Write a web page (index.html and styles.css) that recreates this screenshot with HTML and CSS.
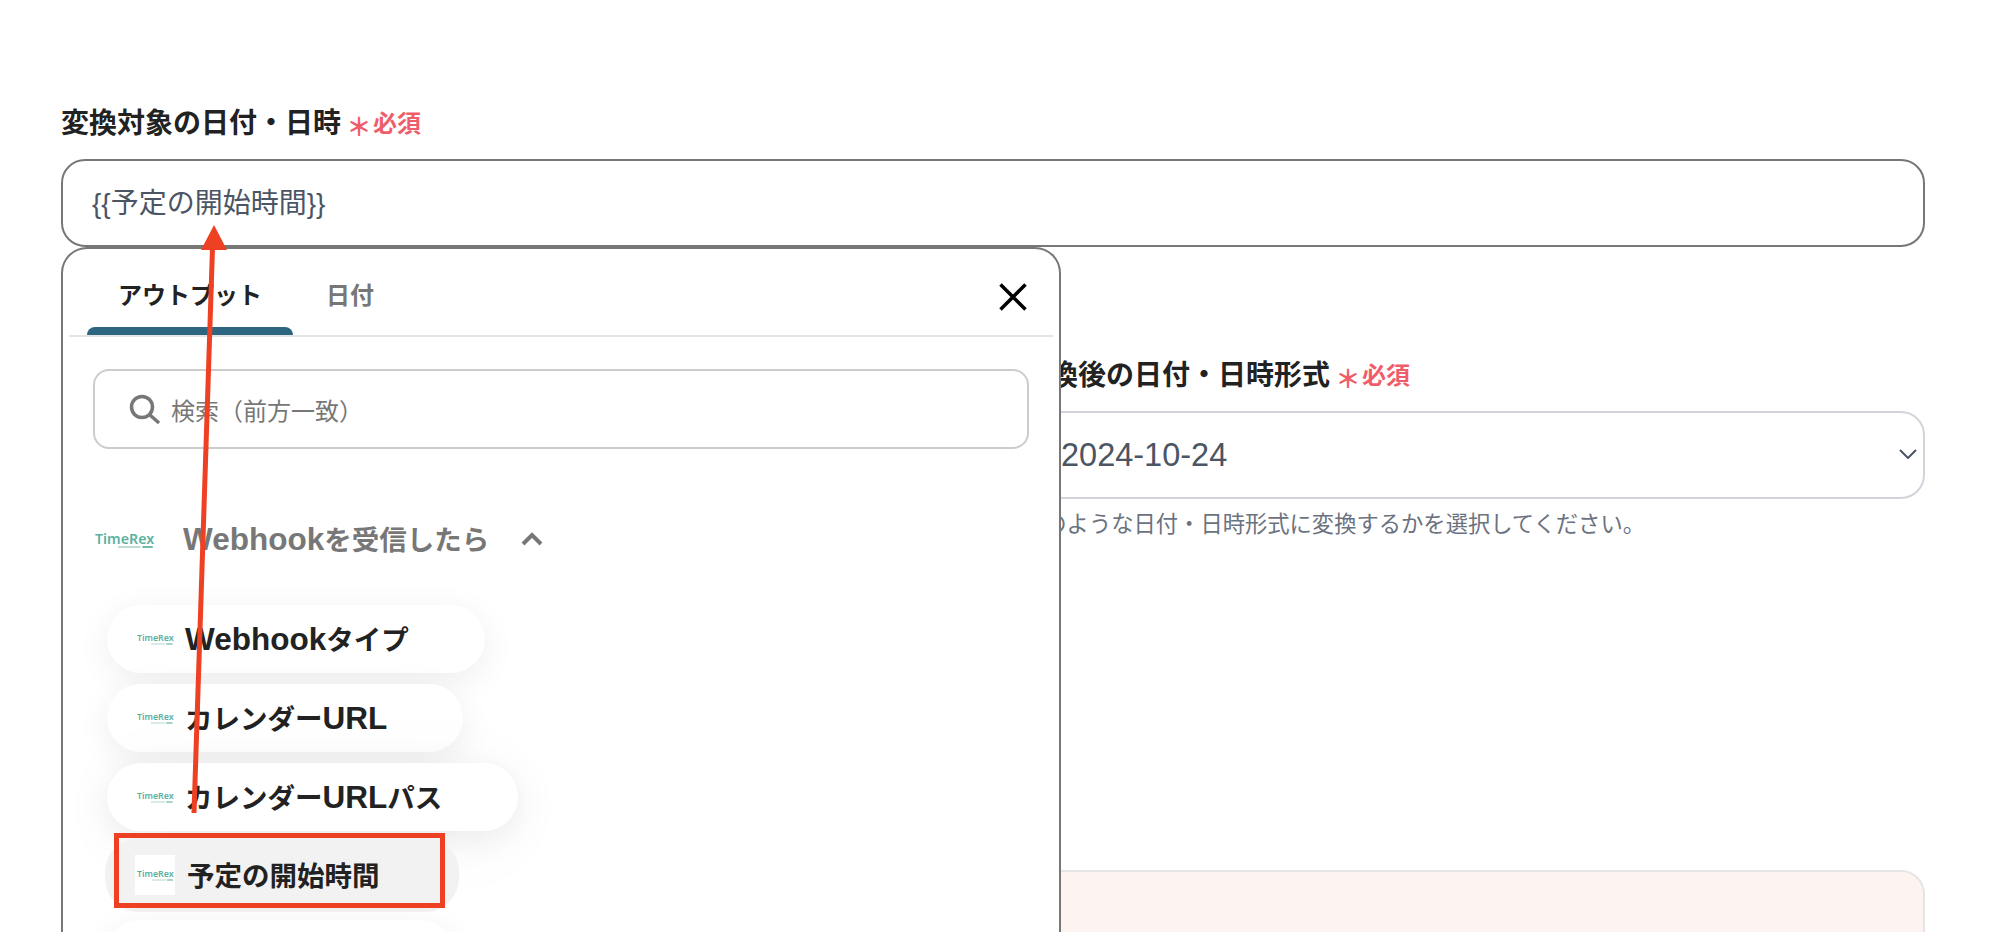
FILE: index.html
```html
<!DOCTYPE html>
<html lang="ja">
<head>
<meta charset="utf-8">
<title>日付・日時形式の変換</title>
<link rel="stylesheet" href="styles.css">
</head>
<body>
<main class="page">
  <section class="field">
    <div class="label">変換対象の日付・日時<span class="req"><span class="star">＊</span>必須</span></div>
    <div class="input">{{予定の開始時間}}</div>
  </section>
  <section class="field field-right">
    <div class="label">変換後の日付・日時形式<span class="req"><span class="star">＊</span>必須</span></div>
    <div class="select">
      <span class="select-value">2024-10-24</span>
      <svg class="select-chevron" viewBox="0 0 18 10"><path d="M1 1l8 8 8-8"/></svg>
    </div>
    <p class="help">どのような日付・日時形式に変換するかを選択してください。</p>
  </section>
  <div class="notice"></div>
</main>

<div class="popup">
  <div class="tabs">
    <div class="tab tab-active">アウトプット</div>
    <div class="tab">日付</div>
    <svg class="close" viewBox="0 0 28 28"><path d="M1.5 1.5l25 25M26.5 1.5l-25 25"/></svg>
  </div>
  <div class="body">
    <div class="search">
      <svg class="search-icon" viewBox="0 0 32 31"><circle cx="13" cy="13" r="10.500"/><path d="M21 21l9 8"/></svg>
      <span>検索（前方一致）</span>
    </div>
    <div class="section-head">
      <span class="logo logo-lg">TimeRex<svg class="logo-sub" viewBox="0 0 40 2"><path d="M0 1h26"/><path class="dark" d="M28 1h12"/></svg></span>
      <span class="section-title"><span class="lat">Webhook</span>を受信したら</span>
      <svg class="section-chevron" viewBox="0 0 22 14"><path d="M2 12l9-9 9 9"/></svg>
    </div>
    <div class="pills">
      <div class="pill"><span class="logo">TimeRex<svg class="logo-sub" viewBox="0 0 40 2"><path d="M0 1h26"/><path class="dark" d="M28 1h12"/></svg></span><span><span class="lat">Webhook</span>タイプ</span></div>
      <div class="pill"><span class="logo">TimeRex<svg class="logo-sub" viewBox="0 0 40 2"><path d="M0 1h26"/><path class="dark" d="M28 1h12"/></svg></span><span>カレンダー<span class="lat">URL</span></span></div>
      <div class="pill pill-wide-shadow"><span class="logo">TimeRex<svg class="logo-sub" viewBox="0 0 40 2"><path d="M0 1h26"/><path class="dark" d="M28 1h12"/></svg></span><span>カレンダー<span class="lat">URL</span>パス</span></div>
      <div class="pill pill-hover"><span class="logo logo-box">TimeRex<svg class="logo-sub" viewBox="0 0 40 2"><path d="M0 1h26"/><path class="dark" d="M28 1h12"/></svg></span><span>予定の開始時間</span></div>
      <div class="pill pill-next"></div>
    </div>
  </div>
</div>

<div class="mark-box"></div>
<svg class="mark-arrow" viewBox="0 0 1990 932">
  <path class="shaft" d="M194 813L212.500 248"/>
  <path class="head" d="M214 225L201 250H227Z"/>
</svg>
</body>
</html>
```
FILE: styles.css
```css
* { box-sizing: border-box; }
html, body { margin: 0; height: 100%; overflow: hidden; background: #fff; }
body { font-family: "Liberation Sans", "Noto Sans CJK JP", sans-serif; color: #222; position: relative; }

.page { height: 932px; overflow: hidden; padding: 104px 65px 0 61px; display: flex; flex-direction: column; }
.label { font-size: 28px; font-weight: 700; line-height: 40px; display: flex; align-items: center; }
.req { display: inline-flex; align-items: center; margin-left: 4px; color: #ef5d6b; font-size: 24px; font-weight: 700; }
.star { width: 28px; font-size: 25px; line-height: 1; font-weight: 700; transform: translateY(3px); text-align: center; }

.input { margin-top: 15px; height: 88px; padding: 0 0 4px 29px; border: 2px solid #777; border-radius: 24px; display: flex; align-items: center; font-size: 28px; color: #4b5563; }

.field-right { margin: 109px 0 0 961px; }
.select { margin-top: 15px; height: 88px; border: 2px solid #d1d5db; border-radius: 24px; padding: 0 6px 0 37px; display: flex; align-items: center; justify-content: space-between; color: #4b5563; font-size: 32.500px; }
.select-chevron { width: 18px; height: 10px; fill: none; stroke: #4b5563; stroke-width: 2; margin-top: -2px; }
.help { margin: 11px 0 0; font-size: 22.300px; line-height: 30px; color: #6b7280; }

.notice { margin-top: 330px; height: 200px; flex: none; background: #fdf3f1; border: 2px solid #e5e5e5; border-radius: 24px; }

.popup { position: absolute; left: 61px; top: 247px; width: 1000px; height: 685px; background: #fff; border: 2px solid #777; border-bottom: 0; border-radius: 26px 26px 0 0; padding: 0 6px; overflow: visible; }
.tabs { height: 88px; display: flex; align-items: flex-end; border-bottom: 2px solid #e5e5e5; padding-left: 18px; position: relative; }
.tab { width: 206px; height: 76px; display: flex; justify-content: center; padding-top: 24px; line-height: 26px; font-size: 24px; font-weight: 700; color: #777; }
.tab + .tab { width: 114px; }
.tab-active { color: #222; position: relative; }
.tab-active::after { content: ""; position: absolute; left: 0; right: 0; bottom: 0; height: 8px; background: #2d6680; border-radius: 8px 8px 0 0; }
.close { position: absolute; right: 26px; top: 34px; width: 28px; height: 28px; fill: none; stroke: #000; stroke-width: 3.500; }

.body { padding: 32px 24px 0 18px; }
.search { margin-left: 6px; height: 80px; border: 2px solid #ccc; border-radius: 16px; display: flex; align-items: center; padding-left: 34px; gap: 10px; font-size: 24px; color: #777; }
.search-icon { width: 32px; height: 31px; fill: none; stroke: #777; stroke-width: 3.500; }

.section-head { margin-top: 68px; height: 44px; display: flex; align-items: center; padding-left: 8px; }
.section-title { margin-left: 30px; padding-bottom: 2px; font-size: 27.500px; font-weight: 700; color: #777; }
.section-chevron { width: 22px; height: 14px; margin-left: 32px; fill: none; stroke: #777; stroke-width: 4; }
.lat { font-size: 31.500px; }

.logo { display: inline-flex; flex-direction: column; align-items: stretch; width: 36px; margin-right: 12px; font-family: "Noto Sans", sans-serif; font-size: 8.800px; font-weight: 600; line-height: 10px; color: #5cb0a0; white-space: nowrap; flex: none; }
.logo-lg { width: 58px; margin: 0; font-size: 14.200px; line-height: 15px; }
.logo-sub { display: block; width: 60%; height: 2px; margin-left: 40%; fill: none; stroke: #b9d8d2; stroke-width: 2; }
.logo-sub .dark { stroke: #5cb0a0; }

.pills { margin: 44px 0 0 20px; display: flex; flex-direction: column; align-items: flex-start; gap: 11px; }
.pill { height: 68px; padding: 0 76px 0 30px; border-radius: 34px; background: #fff; box-shadow: 0 8px 34px rgba(0, 0, 0, .07); display: flex; align-items: center; font-size: 27.500px; font-weight: 700; color: #222; white-space: nowrap; }
.pill > span:last-child { padding-bottom: 3px; }
.pill-wide-shadow { box-shadow: 0 8px 34px rgba(0, 0, 0, .07), 0 10px 90px rgba(0, 0, 0, .035); }
.pill-hover { height: 74px; margin: -4px 0 -3px -2px; padding-right: 79px; background: #f2f2f2; box-shadow: none; }
.pill-next { width: 347px; flex: none; }
.logo-box { width: 40px; height: 40px; background: #fff; justify-content: center; padding-left: 2px; }
.logo-box .logo-sub { width: 56%; }

.mark-box { position: absolute; left: 114px; top: 833px; width: 331px; height: 75px; border: 5px solid #ee4023; }
.mark-arrow { position: absolute; left: 0; top: 0; width: 1990px; height: 932px; pointer-events: none; }
.shaft { fill: none; stroke: #ee4023; stroke-width: 5; }
.head { fill: #ee4023; }
```
